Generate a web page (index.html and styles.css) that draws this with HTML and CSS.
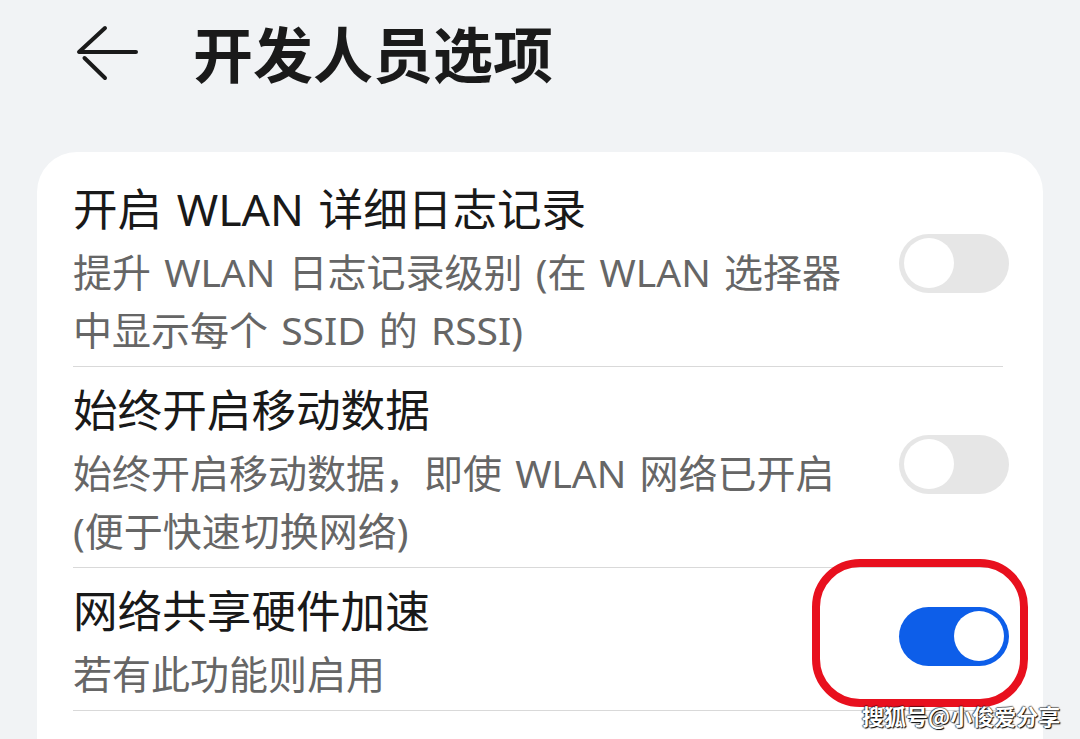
FILE: index.html
```html
<!DOCTYPE html>
<html lang="zh-CN">
<head>
<meta charset="utf-8">
<title>开发人员选项</title>
<link rel="stylesheet" href="styles.css">
</head>
<body>
<header class="topbar">
  <svg class="back" width="64" height="56" viewBox="0 0 64 56" aria-hidden="true">
    <path d="M29 3 L3 27 L60 27" fill="none" stroke="#1a1a1a" stroke-width="4" stroke-linecap="round" stroke-linejoin="round"/>
    <path d="M8.5 33 L29 53" fill="none" stroke="#1a1a1a" stroke-width="4" stroke-linecap="round"/>
  </svg>
  <h1 class="page-title">开发人员选项</h1>
</header>

<main class="card">
  <div class="row">
    <div class="row-text">
      <div class="row-title">开启 WLAN 详细日志记录</div>
      <div class="row-sub">提升 WLAN 日志记录级别 (在 WLAN 选择器<br>中显示每个 SSID 的 RSSI)</div>
    </div>
    <div class="switch"><span class="knob"></span></div>
  </div>
  <div class="row">
    <div class="row-text">
      <div class="row-title">始终开启移动数据</div>
      <div class="row-sub">始终开启移动数据，即使 WLAN 网络已开启<br>(便于快速切换网络)</div>
    </div>
    <div class="switch"><span class="knob"></span></div>
  </div>
  <div class="row">
    <div class="row-text">
      <div class="row-title">网络共享硬件加速</div>
      <div class="row-sub">若有此功能则启用</div>
    </div>
    <div class="switch on"><span class="knob"></span></div>
  </div>
</main>

<div class="highlight"></div>
<div class="watermark">搜狐号@小俊爱分享</div>
</body>
</html>
```

FILE: styles.css
```css
html, body {
  margin: 0;
  padding: 0;
}

body {
  width: 1080px;
  height: 739px;
  overflow: hidden;
  position: relative;
  background: #f1f3f5;
  font-family: "Noto Sans CJK SC", "Noto Sans", sans-serif;
  color: #1a1a1a;
}

.topbar {
  height: 104px;
  display: flex;
  align-items: center;
  padding-left: 76px;
  box-sizing: border-box;
}

.back {
  display: block;
  flex: none;
  margin-top: 2px;
}

.page-title {
  margin: 0 0 0 53px;
  font-size: 60px;
  font-weight: 700;
  line-height: 1;
  color: #1a1a1a;
}

.card {
  margin: 48px 37px 0 37px;
  height: 587px;
  background: #ffffff;
  border-radius: 40px 40px 0 0;
  padding: 14px 40px 0 36px;
  box-sizing: border-box;
}

.row {
  display: flex;
  align-items: center;
  padding: 15px 0 7px 0;
  border-bottom: 1px solid #d9d9d9;
}

.row-text {
  flex: 1;
  min-width: 0;
  font-family: "Noto Sans", "Noto Sans CJK SC", sans-serif;
  word-spacing: 3px;
}

.row-title {
  font-size: 44.6px;
  line-height: 56px;
  color: #191919;
}

.row-sub {
  margin-top: 6px;
  font-size: 39px;
  line-height: 58px;
  color: #666666;
}

.switch {
  flex: none;
  width: 110px;
  height: 59px;
  border-radius: 30px;
  background: #e6e6e6;
  margin: 0 -6px 14px 20px;
  display: flex;
  align-items: center;
  padding: 0 5px;
  box-sizing: border-box;
}

.knob {
  display: block;
  width: 50px;
  height: 50px;
  border-radius: 50%;
  background: #ffffff;
}

.switch.on {
  background: #0d5ee9;
  justify-content: flex-end;
}

.highlight {
  position: absolute;
  left: 812px;
  top: 559px;
  width: 216px;
  height: 148px;
  box-sizing: border-box;
  border: 8px solid #e8101e;
  border-radius: 48px;
}

.watermark {
  position: absolute;
  left: 862px;
  top: 700px;
  font-size: 22px;
  font-weight: 700;
  line-height: 30px;
  color: #ffffff;
  text-shadow: 1px 1px 1px #000, -1px 0 1px rgba(0,0,0,0.6), 0 -1px 1px rgba(0,0,0,0.5);
  white-space: nowrap;
}
```
